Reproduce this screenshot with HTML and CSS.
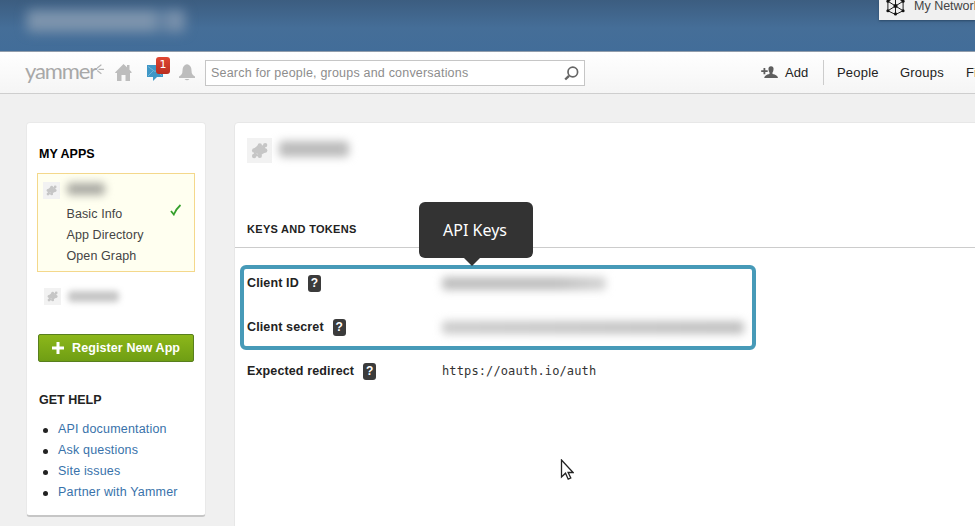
FILE: index.html
```html
<!DOCTYPE html>
<html lang="en">
<head>
<meta charset="utf-8">
<title>Yammer – API Keys</title>
<link rel="stylesheet" href="styles.css">
</head>
<body>
<svg class="defs" aria-hidden="true">
  <symbol id="puzzle" viewBox="0 0 18 18">
    <g fill="currentColor">
      <path d="M8 3L16 8L15 11L10 14L2 10L3 7z"/>
      <circle cx="9.300" cy="3.600" r="2.300"/><circle cx="15" cy="3.300" r="2.300"/><circle cx="15" cy="9" r="2.300"/>
      <circle cx="3.300" cy="8.900" r="2.300"/><circle cx="3.300" cy="14.800" r="2.300"/><circle cx="9.300" cy="14.600" r="2.300"/>
      <path d="M10 4l5-1v6zM3 15V9l6 6z"/>
    </g>
  </symbol>
</svg>
<div class="banner">
  <span class="smudge smudge-company"></span>
  <div class="network">
    <svg class="network-icon" viewBox="0 0 20 20" fill="none" stroke="#111" stroke-width="1">
      <path d="M10 1l8 4v10l-8 4-8-4V5zM2 5l16 10M18 5L2 15M10 1v18"/>
      <g fill="#111" stroke="none"><circle cx="10" cy="10" r="2.200"/><circle cx="2" cy="5" r="1.600"/><circle cx="18" cy="5" r="1.600"/><circle cx="2" cy="15" r="1.600"/><circle cx="18" cy="15" r="1.600"/><circle cx="10" cy="18.300" r="1.600"/></g>
    </svg>
    <span>My Networks</span>
  </div>
</div>
<header class="topbar">
  <div class="logo"><span>yammer</span>
    <svg viewBox="0 0 8 11" fill="none" stroke="#b4b4b4" stroke-width="1.200" stroke-linecap="round"><path d="M1.500 3.800L5 1M3 5.300h4.500M1.500 6.800L5 9.500"/></svg>
  </div>
  <svg class="home" viewBox="0 0 17 17" fill="#bdbdbd"><path d="M8.500 0L12 3.300V1h2.500v4.700L17 8.500l-1.500.5H15v8h-4.500v-6h-4v6H2V9H.5L0 8.500z"/></svg>
  <div class="inbox">
    <svg viewBox="0 0 17 16"><path d="M0 0h16v12h-6l-4 4v-4H0z" fill="#3f97c6"/><path d="M1 1.500l7 5 7-5M1 11l5-5M15 11l-5-5" fill="none" stroke="#7dbbdc" stroke-width=".8"/></svg>
    <b class="badge">1</b>
  </div>
  <svg class="bell" viewBox="0 0 16 17" fill="#bdbdbd"><path d="M6 1Q8-.5 10 1Q12.500 2.500 12.500 6.500Q12.500 11 16 12.500V14H0v-1.500Q3.500 11 3.500 6.500Q3.500 2.500 6 1z"/><path d="M5.500 15h5q-2.500 2.500-5 0z"/></svg>
  <div class="search"><span>Search for people, groups and conversations</span>
    <svg viewBox="0 0 15 15" fill="none" stroke="#666"><circle cx="8.800" cy="6" r="4.800" stroke-width="1.700"/><path d="M5 9.800L1.200 13.500" stroke-width="2.400"/></svg>
  </div>
  <nav class="nav">
    <svg class="person" viewBox="0 0 17 13" fill="#5e5e5e"><path d="M2.500 2v2.200H.2v1.800h2.300v2.200h1.800V6h2.400V4.200H4.300V2z"/><path d="M7.500 3.500Q7 .5 10 .3Q13 .5 12.500 3.500Q12.400 5.500 11.500 6.500V8Q16.500 8.800 17 12H3.200Q3.700 8.800 8.500 8V6.500Q7.600 5.500 7.500 3.500z"/></svg>
    <span class="add">Add</span><span class="people">People</span><span class="groups">Groups</span><span class="files">Files</span>
  </nav>
</header>
<div class="content">
  <aside class="sidebar">
    <h2 class="apps-title">MY APPS</h2>
    <section class="current">
      <div class="app-row"><span class="app-icon"><svg><use href="#puzzle"/></svg></span><span class="smudge smudge-app"></span></div>
      <ul class="app-menu">
        <li>Basic Info <svg class="check" viewBox="0 0 12 12" fill="none" stroke="#35a02c" stroke-width="1.800"><path d="M1 7l2.800 3.500Q6.500 4.500 10.500 1"/></svg></li>
        <li>App Directory</li><li>Open Graph</li>
      </ul>
    </section>
    <div class="app-row other"><span class="app-icon"><svg><use href="#puzzle"/></svg></span><span class="smudge smudge-other"></span></div>
    <div class="register"><svg viewBox="0 0 12 12"><path d="M6 0v12M0 6h12" stroke="#fff" stroke-width="3"/></svg><span>Register New App</span></div>
    <h2 class="help-title">GET HELP</h2>
    <ul class="help">
      <li><a>API documentation</a></li><li><a>Ask questions</a></li><li><a>Site issues</a></li><li><a>Partner with Yammer</a></li>
    </ul>
  </aside>
  <main class="panel">
    <div class="app-head"><span class="app-icon large"><svg><use href="#puzzle"/></svg></span><span class="smudge smudge-title"></span></div>
    <h1 class="keys-title"><span>KEYS AND TOKENS</span>
      <span class="tooltip">API Keys</span>
    </h1>
    <div class="highlight">
      <div class="field"><div class="label"><span>Client ID</span><i class="q">?</i></div><span class="smudge smudge-id"></span></div>
      <div class="field"><div class="label"><span>Client secret</span><i class="q">?</i></div><span class="smudge smudge-secret"></span></div>
    </div>
    <div class="field redirect"><div class="label"><span>Expected redirect</span><i class="q">?</i></div><code>https://oauth.io/auth</code></div>
    <svg class="cursor" viewBox="0 0 14 22"><path d="M1.500 1v17l4-3.800 2.700 6 2.600-1.200-2.700-5.500h5z" fill="#fff" stroke="#222" stroke-width="1.300"/></svg>
  </main>
</div>
</body>
</html>
```
FILE: styles.css
```css
* { box-sizing: border-box; }
body { margin: 0; width: 975px; height: 526px; overflow: hidden; background: #f0f0f0; color: #333; font: 12.5px/21px "Liberation Sans", Arial, sans-serif; }
h1, h2, ul { margin: 0; padding: 0; }
ul { list-style: none; }
svg { display: block; flex: none; }
span { white-space: nowrap; }
.defs { position: absolute; width: 0; height: 0; }
.smudge { display: block; flex: none; filter: blur(4px); border-radius: 4px; background: #c2c2c2; }

.banner { height: 52px; display: flex; justify-content: space-between; align-items: flex-start; background: linear-gradient(#3c5d80, #456e98 55%, #426d99); border-bottom: 1px solid #919dab; overflow: hidden; }
.smudge-company { width: 158px; height: 22px; margin: 10px 0 0 27px; background: linear-gradient(90deg, #7d94ad 80%, #587a9d 85%, #7890ab 90%); filter: blur(6px); }
.network { width: 96px; height: 20px; padding-left: 7px; display: flex; align-items: flex-start; background: #f0f0f0; box-shadow: 0 1px 2px #2b4a68; overflow: hidden; color: #444; }
.network-icon { width: 19px; height: 20px; margin: -4px 9px 0 0; }
.network span { line-height: 14px; margin-top: -1px; }

.topbar { height: 42px; display: flex; align-items: flex-start; overflow: hidden; background: linear-gradient(#fff, #f5f5f5); border-bottom: 1px solid #cecece; }
.logo { width: 89px; padding: 8px 0 0 25px; display: flex; flex: none; color: #a8a8a8; font: 22px/22px Lato, sans-serif; letter-spacing: -1.1px; }
.logo svg { width: 8px; height: 11px; margin-top: 4px; }
.home { width: 17px; height: 17px; margin: 12px 0 0 26px; }
.inbox { width: 23px; height: 29px; margin: 4px 0 0 15px; position: relative; flex: none; }
.inbox svg { width: 17px; height: 16px; margin-top: 9px; }
.badge { position: absolute; left: 9px; top: 1px; width: 14px; height: 17px; border-radius: 3px; background: linear-gradient(#e04631, #b92e20); color: #fff; font: 11px/16px "DejaVu Sans", sans-serif; text-align: center; }
.bell { width: 16px; height: 17px; margin: 12px 10px 0 9px; }
.search { width: 380px; height: 26px; margin-top: 8px; padding: 0 5px; flex: none; display: flex; justify-content: space-between; align-items: center; border: 1px solid #c6c6c6; background: #fff; color: #8d8d8d; letter-spacing: .2px; }
.search svg { width: 15px; height: 15px; }
.nav { margin-left: 176px; display: flex; align-items: flex-start; padding-top: 8px; font-size: 13px; line-height: 25px; color: #222; }
.person { width: 17px; height: 13px; margin: 6px 7px 0 0; }
.add { width: 39px; border-right: 1px solid #ccc; }
.people { width: 76px; padding-left: 13px; }
.groups { width: 66px; }
.people, .groups { letter-spacing: .2px; }
.add, .people, .groups, .files { flex: none; height: 25px; }

.content { display: flex; align-items: flex-start; gap: 28px; padding: 28px 0 0 26px; }
.sidebar { width: 180px; height: 395px; padding: 22px 11px 0; flex: none; background: #fff; border: 1px solid #e9e9e9; border-bottom: 2px solid #c6c6c6; border-radius: 4px; }
.sidebar h2 { font-size: 12.5px; line-height: 18px; padding-left: 1px; color: #222; }
.sidebar .apps-title { color: #000; }
.current { width: 158px; height: 99px; margin: 10px 0 0 -1px; padding: 7px 5px 0; border: 1px solid #f4d88b; background: #fffff0; }
.app-row { display: flex; align-items: center; height: 18px; }
.app-icon { width: 17px; height: 17px; padding: 3px; flex: none; background: #f2f2f2; color: #c6c6c6; }
.app-icon svg { width: 100%; height: 100%; }
.smudge-app { width: 38px; height: 12px; margin-left: 7px; margin-top: -2px; background: #a9a9a2; }
.app-menu { margin: 5px 0 0 23.500px; letter-spacing: .1px; color: #444; }
.app-menu li { display: flex; justify-content: space-between; }
.check { width: 12px; height: 12px; margin: 0 7px 0 0; }
.other { margin: 15px 0 0 6px; }
.smudge-other { width: 51px; height: 11px; margin-left: 7px; background: #c5c5c5; filter: blur(3px); }
.register { width: 156px; height: 28px; margin-top: 29px; padding-left: 13px; display: flex; align-items: center; gap: 8px; border: 1px solid #587f1d; border-radius: 2px; background: linear-gradient(#8cb71a, #6f9e14); color: #fff; font-weight: 700; letter-spacing: .1px; }
.register svg { width: 12px; height: 12px; }
.sidebar .help-title { margin: 29px 0 10px; }
.help { padding-left: 20px; color: #3872aa; letter-spacing: .18px; }
.help li { position: relative; }
.help li::before { content: ""; position: absolute; left: -15px; top: 9px; width: 5px; height: 5px; border-radius: 50%; background: #222; }

.panel { width: 742px; height: 420px; padding-top: 15px; flex: none; background: #fff; border: 1px solid #e7e7e7; border-radius: 4px 0 0 0; }
.app-head { display: flex; align-items: center; padding-left: 12px; height: 25px; }
.large { width: 25px; height: 25px; padding: 4px; }
.smudge-title { width: 70px; height: 16px; margin-left: 7px; margin-top: -3px; background: #bcbcbc; }
.keys-title { position: relative; height: 85px; padding: 56px 0 0 12px; border-bottom: 1px solid #ccc; color: #222; font-size: 11px; line-height: 20px; letter-spacing: .3px; }
.tooltip { position: absolute; left: 184px; top: 39px; width: 114px; height: 56px; padding-right: 2px; border-radius: 6px; background: #333; color: #fff; text-align: center; font: 16px/56px "Noto Sans", sans-serif; letter-spacing: 0; }
.tooltip::after { content: ""; position: absolute; left: 45px; top: 56px; border: 8px solid transparent; border-top: 8px solid #333; border-bottom: 0; }
.highlight { width: 516px; height: 85px; margin: 17px 0 0 5px; padding: 4px 3px 3px; border: 4px solid #479ab8; border-radius: 6px; }
.highlight .field + .field { margin-top: 23px; }
.field { display: flex; align-items: center; height: 21px; }
.label { display: flex; align-items: center; width: 195px; flex: none; color: #222; font-weight: 700; letter-spacing: .13px; }
.q { width: 13px; height: 17px; margin-left: 9px; border-radius: 3px; background: #3b3b3b; color: #fff; font: 700 12px/17px "Liberation Sans", sans-serif; text-align: center; letter-spacing: 0; }
.smudge-id { width: 164px; height: 13px; background: linear-gradient(90deg, #bebebe 70%, #d4d4d4); }
.smudge-secret { width: 302px; height: 13px; background: linear-gradient(90deg, #ccc, #c0c0c0); }
.redirect { padding-left: 12px; margin-top: 11px; }
code { font: 12px/21px "DejaVu Sans Mono", monospace; letter-spacing: .12px; color: #333; }
.cursor { width: 14px; height: 22px; margin: 77px 0 0 325px; }
```
